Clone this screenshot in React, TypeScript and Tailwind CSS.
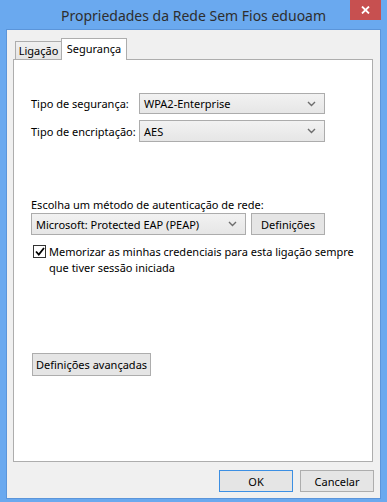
import React from "react";

const font = { fontFamily: '"Noto Sans", "Segoe UI", sans-serif' };

function Chevron() {
  return (
    <svg width="9" height="6" viewBox="0 0 9 6" className="shrink-0">
      <path d="M1 1 L4.5 4.5 L8 1" fill="none" stroke="#6d6d6d" strokeWidth="1.4" />
    </svg>
  );
}

function Select({ value, className }: { value: string; className: string }) {
  return (
    <div
      className={`flex items-center justify-between border border-[#acacac] bg-gradient-to-b from-[#f2f2f2] to-[#e6e6e6] pl-[4px] pr-[8px] ${className}`}
    >
      <span className="text-[11px] leading-none text-black whitespace-nowrap">{value}</span>
      <Chevron />
    </div>
  );
}

function Button({ label, className }: { label: string; className: string }) {
  return (
    <div
      className={`flex items-center justify-center border bg-[#e5e5e5] text-[11px] leading-none text-black whitespace-nowrap ${className}`}
    >
      {label}
    </div>
  );
}

export default function App() {
  return (
    <div style={font} className="w-[387px] h-[502px] bg-[#6aa9ef] flex flex-col overflow-hidden">
      {/* title bar */}
      <div className="relative h-[29px] shrink-0 flex items-center justify-center">
        <span className="text-[14px] text-[#2e2e2e] leading-none mt-[3px]">
          Propriedades da Rede Sem Fios eduoam
        </span>
        <div className="absolute right-[6px] top-0 w-[31px] h-[20px] bg-[#c75050] flex items-center justify-center">
          <svg width="9" height="8" viewBox="0 0 9 8">
            <path d="M1 0.5 L8 7.5 M8 0.5 L1 7.5" stroke="#fff" strokeWidth="1.8" />
          </svg>
        </div>
      </div>

      {/* client area */}
      <div className="mx-[6px] mb-[3px] flex-1 border border-[#5b95da] bg-[#f0f0f0] flex flex-col">
        <div className="pl-[6px] pt-[8px]">
          {/* tabs */}
          <div className="flex items-end pl-[2px] h-[21px]">
            <div className="h-[18px] w-[47px] border border-b-0 border-[#adadad] bg-gradient-to-b from-[#f0f0f0] to-[#e5e5e5] flex items-center justify-center text-[11px] leading-none text-black">
              Ligação
            </div>
            <div className="relative z-10 -mb-px h-[22px] w-[66px] border border-b-0 border-[#adadad] bg-white flex items-start justify-center pt-[4px] text-[11px] leading-none text-black -ml-px">
              Segurança
            </div>
          </div>

          {/* panel */}
          <div className="w-[360px] h-[403px] border border-[#adadad] bg-white pl-[17px] pt-[33px] flex flex-col text-[11px] text-black">
            <div className="flex items-center h-[21px]">
              <span className="w-[108px] leading-none whitespace-nowrap">Tipo de segurança:</span>
              <Select value="WPA2-Enterprise" className="w-[186px] h-[21px]" />
            </div>
            <div className="flex items-center h-[22px] mt-[6px]">
              <span className="w-[108px] leading-none whitespace-nowrap">Tipo de encriptação:</span>
              <Select value="AES" className="w-[186px] h-[22px]" />
            </div>

            <div className="mt-[55px] leading-[15px] whitespace-nowrap">Escolha um método de autenticação de rede:</div>
            <div className="flex items-center mt-[1px] gap-[5px]">
              <Select value="Microsoft: Protected EAP (PEAP)" className="w-[215px] h-[22px]" />
              <Button label="Definições" className="w-[74px] h-[22px] border-[#adadad]" />
            </div>

            <div className="flex items-start mt-[9px] pl-[2px]">
              <div className="w-[13px] h-[13px] border border-[#333] bg-white flex items-center justify-center shrink-0 mt-[1px]">
                <svg width="10" height="9" viewBox="0 0 10 9">
                  <path d="M1 4.5 L3.8 7.5 L9 1" fill="none" stroke="#000" strokeWidth="1.8" />
                </svg>
              </div>
              <span className="ml-[3px] leading-[16px] whitespace-nowrap">
                Memorizar as minhas credenciais para esta ligação sempre
                <br />
                que tiver sessão iniciada
              </span>
            </div>

            <div className="mt-[77px] pl-[1px]">
              <Button label="Definições avançadas" className="w-[119px] h-[23px] border-[#adadad]" />
            </div>
          </div>
        </div>

        {/* footer buttons */}
        <div className="flex justify-end gap-[7px] pr-[6px] mt-[8px]">
          <Button label="OK" className="w-[74px] h-[22px] border-[#3c8fe3]" />
          <Button label="Cancelar" className="w-[74px] h-[22px] border-[#adadad]" />
        </div>
      </div>
    </div>
  );
}
